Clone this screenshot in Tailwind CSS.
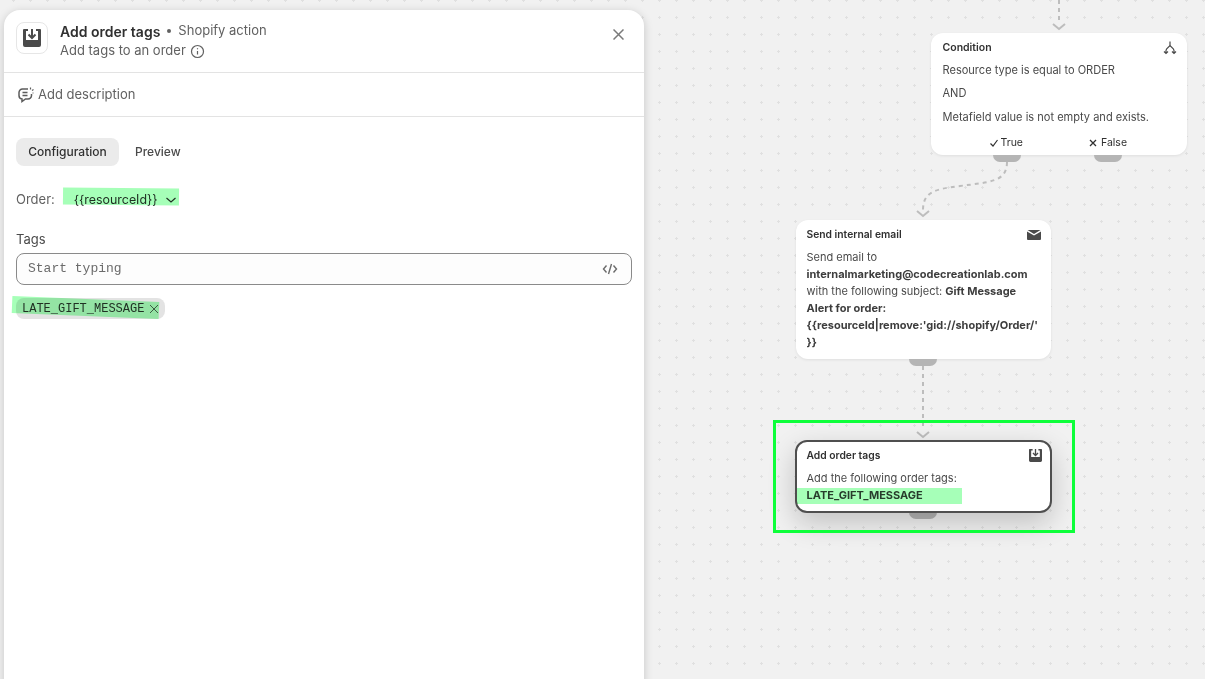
<!DOCTYPE html>
<html lang="en">
  <head>
    <meta charset="UTF-8" />
    <title>Add order tags</title>
    <script src="https://cdn.jsdelivr.net/npm/@tailwindcss/browser@4"></script>
  </head>
  <body class="m-0 overflow-hidden bg-[#f1f1f1] font-['Inter',sans-serif]">
    <div class="relative h-[679px] w-[1205px] overflow-hidden bg-[#f1f1f1] bg-[radial-gradient(circle,#e0e0e0_1px,transparent_1.3px)] bg-[size:17px_17px] bg-[position:5px_-8px]">
      <!-- connectors -->
      <svg class="absolute left-0 top-0" width="1205" height="679" fill="none">
        <g stroke="#bdbdbd" stroke-width="2" stroke-dasharray="4 4">
          <path d="M1059 0V22" />
          <path d="M1007 162C1007 182 990 182 960 186C935 189 923 192 923 210" />
          <path d="M923 366V430" />
        </g>
        <g stroke="#bdbdbd" stroke-width="2">
          <path d="M1053 24l6 5 6-5" />
          <path d="M917 211l6 5 6-5" />
          <path d="M917 432l6 5 6-5" />
        </g>
      </svg>

      <!-- condition node -->
      <div class="absolute left-[931px] top-[33px] h-[122px] w-[256px] rounded-xl bg-white px-[11.5px] pt-[8px] text-[11.05px] text-[#4a4a4a] shadow-[0_1px_3px_rgba(0,0,0,0.08)]">
        <div class="flex h-[13px] items-center justify-between">
          <span class="text-[10.5px] font-semibold text-[#303030]">Condition</span>
          <svg width="14" height="14" viewBox="0 0 14 14" fill="none" stroke="#4a4a4a" stroke-width="1.2" class="mr-[-1px]"><path d="M7 .5V4C7 6 3 6.500 3 9.500v3M7 4c0 2 4 2.500 4 5.500v3M1 10.500l2 2 2-2M9 10.500l2 2 2-2" /></svg>
        </div>
        <p class="mt-[10px] leading-[13px]">Resource type is equal to ORDER</p>
        <p class="mt-[10px] leading-[13px]">AND</p>
        <p class="mt-[11px] leading-[13px]">Metafield value is not empty and exists.</p>
        <div class="mt-[11px] flex text-[10.5px] text-[#303030]">
          <span class="ml-[46px] flex items-center gap-[2px]">
            <svg width="10" height="10" viewBox="0 0 10 10" fill="none" stroke="#303030" stroke-width="1.2"><path d="M1.500 5.500 4 8l4.500-6" /></svg>True
          </span>
          <span class="ml-[65px] flex items-center gap-[3px]">
            <svg width="10" height="10" viewBox="0 0 10 10" fill="none" stroke="#303030" stroke-width="1.300"><path d="m2 2 6 6M8 2 2 8" /></svg>False
          </span>
        </div>
      </div>
      <div class="absolute left-[993px] top-[155px] h-[7px] w-[28px] rounded-b-lg bg-[#b5b5b5]"></div>
      <div class="absolute left-[1094px] top-[155px] h-[7px] w-[28px] rounded-b-lg bg-[#b5b5b5]"></div>

      <!-- email node -->
      <div class="absolute left-[796px] top-[220px] h-[139px] w-[255px] rounded-xl bg-white px-[10.5px] pt-[8px] text-[11px] leading-[17px] text-[#4a4a4a] shadow-[0_1px_3px_rgba(0,0,0,0.08)]">
        <div class="flex h-[13px] items-center justify-between">
          <span class="text-[10.3px] font-semibold text-[#303030]">Send internal email</span>
          <svg width="14" height="10" viewBox="0 0 14 10" fill="#4a4a4a"><path d="M0 1.500V9a1 1 0 0 0 1 1h12a1 1 0 0 0 1-1V1.500L7 5.500zM.5 0h13L7 4z" /></svg>
        </div>
        <div class="mt-[8px]">
          <p>Send email to</p>
          <p class="font-[650] text-[#3d3d3d]">internalmarketing@codecreationlab.com</p>
          <p>with the following subject: <span class="font-[650] text-[#3d3d3d]">Gift Message</span></p>
          <p class="font-[650] text-[#3d3d3d]">Alert for order:</p>
          <p class="whitespace-nowrap font-[650] text-[#3d3d3d]">{{resourceId|remove:'gid://shopify/Order/'</p>
          <p class="font-[650] text-[#3d3d3d]">}}</p>
        </div>
      </div>
      <div class="absolute left-[909px] top-[359px] h-[7px] w-[28px] rounded-b-lg bg-[#b5b5b5]"></div>

      <!-- selected node -->
      <div class="absolute left-[909px] top-[512px] h-[7px] w-[28px] rounded-b-lg bg-[#b5b5b5]"></div>
      <div class="absolute left-[795px] top-[440px] h-[73px] w-[257px] rounded-xl border-2 border-[#4f4f4f] bg-white px-[9.5px] pt-[7px] text-[11px] leading-[17px] text-[#4a4a4a] shadow-[0_10px_28px_rgba(0,0,0,0.2)]">
        <div class="flex h-[13px] items-center justify-between">
          <span class="text-[10.3px] font-semibold text-[#303030]">Add order tags</span>
          <svg width="13" height="13" viewBox="0 0 18 18" fill="none" class="mr-[-1px]"><path d="M1 0H5V2H3V11H15V2H13V0H17a1 1 0 0 1 1 1V16a2 2 0 0 1-2 2H2a2 2 0 0 1-2-2V1a1 1 0 0 1 1-1z" fill="#4a4a4a" /><path d="M9 0v8.500M5.500 5.500 9 9l3.500-3.500" stroke="#4a4a4a" stroke-width="1.800" /></svg>
        </div>
        <p class="mt-[8px]">Add the following order tags:</p>
        <p class="font-[650] text-[#3d3d3d]">LATE_GIFT_MESSAGE</p>
      </div>
      <div class="absolute left-[797px] top-[488px] h-[16px] w-[165px] bg-[#00ff33]/35 mix-blend-multiply"></div>
      <div class="absolute left-[773px] top-[420px] h-[113px] w-[302px] border-[3px] border-[#0dff3a]"></div>

      <!-- side panel -->
      <aside class="absolute left-[4px] top-[10px] h-[690px] w-[640px] rounded-t-2xl bg-white shadow-[0_2px_10px_rgba(0,0,0,0.18)]">
        <header class="flex h-[63px] items-start border-b border-[#e3e3e3] pl-[12px] pr-[20px] pt-[12px]">
          <div class="flex h-[32px] w-[32px] items-center justify-center rounded-lg border border-[#e6e6e6]">
            <svg width="18" height="18" viewBox="0 0 18 18" fill="none"><path d="M1 0H5V2H3V11H15V2H13V0H17a1 1 0 0 1 1 1V16a2 2 0 0 1-2 2H2a2 2 0 0 1-2-2V1a1 1 0 0 1 1-1z" fill="#4a4a4a" /><path d="M9 0v8.500M5.500 5.500 9 9l3.500-3.500" stroke="#4a4a4a" stroke-width="2" /></svg>
          </div>
          <div class="ml-[12px]">
            <div class="flex h-[18px] items-center text-[13px] text-[#616161]">
              <span class="text-[14px] font-semibold text-[#303030]">Add order tags</span>
              <span class="mx-[7px] h-[4px] w-[4px] rounded-full bg-[#616161]"></span>
              <span>Shopify action</span>
            </div>
            <div class="mt-[2px] flex h-[18px] items-center gap-[4px] text-[13px] text-[#616161]">
              <span>Add tags to an order</span>
              <svg width="15" height="15" viewBox="0 0 15 15" fill="none" stroke="#616161" stroke-width="1.200"><circle cx="7.500" cy="7.500" r="6" /><path d="M7.500 7v3.500" /><path d="M7.500 4.200v1.100" /></svg>
            </div>
          </div>
          <svg class="ml-auto mt-[7px]" width="11" height="11" viewBox="0 0 11 11" fill="none" stroke="#7a7a7a" stroke-width="1.500"><path d="m.5.5 10 10M10.500.5l-10 10" /></svg>
        </header>

        <div class="flex h-[44px] items-center gap-[3px] border-b border-[#e3e3e3] pl-[13px] text-[13px] text-[#616161]">
          <svg width="18" height="18" viewBox="0 0 18 18" fill="none" stroke="#5c5c5c" stroke-width="1.500"><path d="M11 3H5.500A3.500 3.500 0 0 0 2 6.500v3A3.500 3.500 0 0 0 5 13v2.500L8.500 13H11a3.500 3.500 0 0 0 3.500-3.500V8" /><path d="M5.500 6.500h5M5.500 9.500h5" /><path d="M13.500 1.500v2M16.500 3.500l-1.500 1M16.500 7h-1" stroke-width="1.200" /></svg>
          <span>Add description</span>
        </div>

        <div class="px-[12px]">
          <div class="mt-[21px] flex h-[28px] items-center text-[12px] font-[550] text-[#303030]">
            <span class="flex h-[28px] w-[103px] items-center justify-center rounded-lg bg-[#ebebeb]">Configuration</span>
            <span class="ml-[16px] text-[#4a4a4a]">Preview</span>
          </div>

          <div class="mt-[24px] flex h-[20px] items-center text-[13px] text-[#616161]">
            <span>Order:</span>
            <span class="ml-[19px] text-[12.4px] text-[#303030]">{{resourceId}}</span>
            <svg class="ml-[7px]" width="12" height="12" viewBox="0 0 12 12" fill="none" stroke="#303030" stroke-width="1.200"><path d="m1.500 4 4.500 4 4.500-4" /></svg>
          </div>

          <label class="mt-[20px] block h-[18px] text-[13px] leading-[18px] text-[#4a4a4a]">Tags</label>
          <div class="mt-[5px] flex h-[32px] w-[616px] items-center justify-between rounded-lg border border-[#8a8a8a] bg-[#fdfdfd] pl-[11px] pr-[13px] font-['Liberation_Mono',monospace] text-[13px] text-[#6b6b6b]">
            <span>Start typing</span>
            <svg width="16" height="16" viewBox="0 0 16 16" fill="none" stroke="#6b6b6b" stroke-width="1.400"><path d="M4.500 4.500 1.500 8l3 3.500M11.500 4.500l3 3.500-3 3.500M9.500 3l-3 10" /></svg>
          </div>

          <div class="mt-[13px] flex h-[21px] w-[149px] items-center gap-[5px] rounded-lg bg-[#e3e3e3] pl-[6px] font-['Liberation_Mono',monospace] text-[12px] text-[#303030]">
            <span>LATE_GIFT_MESSAGE</span>
            <svg width="10" height="10" viewBox="0 0 10 10" fill="none" stroke="#5c5c5c" stroke-width="1"><path d="m1 1 8 8M9 1 1 9" /></svg>
          </div>
        </div>
      </aside>

      <!-- marker highlights -->
      <div class="absolute left-[63px] top-[188px] h-[17px] w-[116px] rotate-[0.5deg] bg-[#00ff33]/35 mix-blend-multiply"></div>
      <div class="absolute left-[12px] top-[299px] h-[17px] w-[147px] rotate-[2.400deg] bg-[#00ff33]/35 mix-blend-multiply"></div>
    </div>
  </body>
</html>
